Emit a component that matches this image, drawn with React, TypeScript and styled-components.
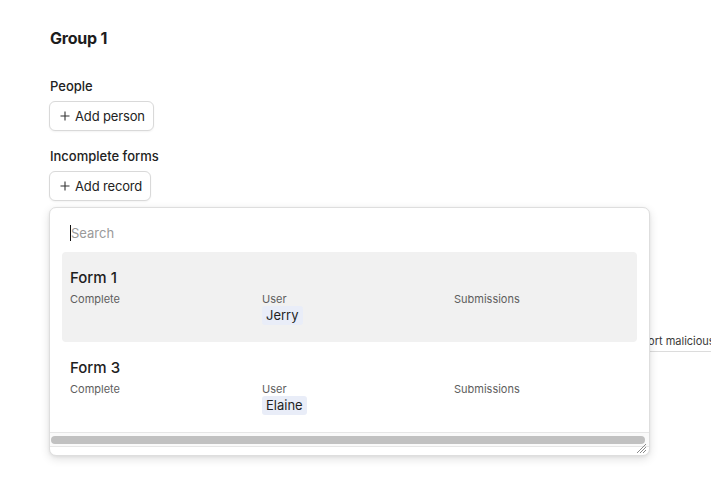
import React from "react";
import styled, { createGlobalStyle } from "styled-components";

const GlobalStyle = createGlobalStyle`
  html, body {
    margin: 0;
    padding: 0;
    background: #ffffff;
    overflow: hidden;
  }
  body {
    font-family: Inter, "Noto Sans", "Liberation Sans", sans-serif;
    color: #1f1f1f;
  }
`;

const Page = styled.div`
  position: relative;
  width: 711px;
  height: 501px;
  padding: 28px 0 0 50px;
  box-sizing: border-box;
  overflow: hidden;
`;

const Title = styled.h1`
  margin: 0 0 30px;
  font-size: 16px;
  line-height: 20px;
  font-weight: 700;
  letter-spacing: -0.2px;
  color: #1d1d1d;
`;

const Section = styled.div`
  display: flex;
  flex-direction: column;
  align-items: flex-start;
  gap: 7px;
  margin-bottom: 17px;
  position: relative;
`;

const Label = styled.div`
  font-size: 13px;
  line-height: 16px;
  font-weight: 500;
  color: #222;
`;

const Button = styled.button`
  display: flex;
  align-items: center;
  gap: 5px;
  height: 30px;
  margin-left: -1px;
  padding: 0 8px 0 10px;
  border: 1px solid #d9d9d9;
  border-radius: 6px;
  background: #fff;
  box-shadow: 0 1px 2px rgba(0, 0, 0, 0.05);
  font-family: inherit;
  font-size: 13px;
  letter-spacing: -0.15px;
  color: #222;
  cursor: pointer;
`;

const Anchor = styled.div`
  position: relative;
`;

const Popover = styled.div`
  position: absolute;
  top: 36px;
  left: -1px;
  width: 601px;
  height: 249px;
  box-sizing: border-box;
  border: 1px solid #dedede;
  border-radius: 7px;
  background: #fff;
  box-shadow: 0 3px 10px rgba(0, 0, 0, 0.12), 0 1px 3px rgba(0, 0, 0, 0.06);
  display: flex;
  flex-direction: column;
  overflow: hidden;
  z-index: 2;
`;

const SearchWrap = styled.div`
  padding: 10px 12px 4px;
`;

const SearchInput = styled.div`
  display: flex;
  align-items: center;
  height: 30px;
  padding: 0 8px;
  font-size: 13px;
  color: #9a9a9a;
`;

const Caret = styled.span`
  display: inline-block;
  width: 1px;
  height: 16px;
  background: #111;
`;

const List = styled.div`
  padding: 0 12px;
  display: flex;
  flex-direction: column;
`;

const Row = styled.div<{ $active?: boolean }>`
  height: 90px;
  box-sizing: border-box;
  padding: 16px 8px 0;
  border-radius: 4px;
  background: ${(p) => (p.$active ? "#f1f1f1" : "transparent")};
`;

const RowTitle = styled.div`
  font-size: 15px;
  line-height: 20px;
  font-weight: 500;
  color: #1e1e1e;
  margin-bottom: 4px;
`;

const Fields = styled.div`
  display: grid;
  grid-template-columns: 192px 192px 192px;
`;

const Field = styled.div`
  display: flex;
  flex-direction: column;
  align-items: flex-start;
`;

const FieldName = styled.div`
  font-size: 11px;
  line-height: 14px;
  color: #5e5e5e;
`;

const Chip = styled.span`
  display: inline-block;
  height: 19px;
  line-height: 19px;
  padding: 0 4px;
  border-radius: 3px;
  background: #e9edf8;
  font-size: 13px;
  color: #1f1f1f;
`;

const ScrollTrack = styled.div`
  position: relative;
  height: 15px;
  box-sizing: border-box;
  border-top: 1px solid #e6e6e6;
  border-bottom: 1px solid #e6e6e6;
  padding: 3px 4px 0 1px;
  background: #fafafa;
`;

const Thumb = styled.div`
  height: 8px;
  border-radius: 4px;
  background: #c1c1c1;
`;

const Grip = styled.svg`
  position: absolute;
  right: 2px;
  bottom: -8px;
`;

const Behind = styled.div`
  position: absolute;
  left: 570px;
  top: 332px;
  height: 19px;
  padding: 0 0 0 58px;
  border-bottom: 1px solid #dcdcdc;
  background: #fff;
  font-size: 11px;
  line-height: 19px;
  color: #3a3a3a;
  white-space: nowrap;
  z-index: 1;
`;

const Plus = () => (
  <svg width="10" height="10" viewBox="0 0 10 10" fill="none">
    <path d="M5 0.5v9M0.5 5h9" stroke="#333" strokeWidth="1.1" />
  </svg>
);

interface FormRow {
  name: string;
  user: string;
}

const forms: FormRow[] = [
  { name: "Form 1", user: "Jerry" },
  { name: "Form 3", user: "Elaine" },
];

const App = (): JSX.Element => {
  return (
    <>
      <GlobalStyle />
      <Page>
        <Title>Group 1</Title>
        <Section>
          <Label>People</Label>
          <Button>
            <Plus />
            Add person
          </Button>
        </Section>
        <Section>
          <Label>Incomplete forms</Label>
          <Anchor>
            <Button>
              <Plus />
              Add record
            </Button>
            <Popover>
              <SearchWrap>
                <SearchInput>
                  <Caret />
                  Search
                </SearchInput>
              </SearchWrap>
              <List>
                {forms.map((f, i) => (
                  <Row key={f.name} $active={i === 0}>
                    <RowTitle>{f.name}</RowTitle>
                    <Fields>
                      <Field>
                        <FieldName>Complete</FieldName>
                      </Field>
                      <Field>
                        <FieldName>User</FieldName>
                        <Chip>{f.user}</Chip>
                      </Field>
                      <Field>
                        <FieldName>Submissions</FieldName>
                      </Field>
                    </Fields>
                  </Row>
                ))}
              </List>
              <ScrollTrack>
                <Thumb />
                <Grip width="12" height="12" viewBox="0 0 12 12">
                  <path
                    d="M11 2L2 11M11 5L5 11M11 8L8 11"
                    stroke="#8a8a8a"
                    strokeWidth="1"
                  />
                </Grip>
              </ScrollTrack>
            </Popover>
          </Anchor>
        </Section>
        <Behind>Report malicious</Behind>
      </Page>
    </>
  );
};

export default App;
